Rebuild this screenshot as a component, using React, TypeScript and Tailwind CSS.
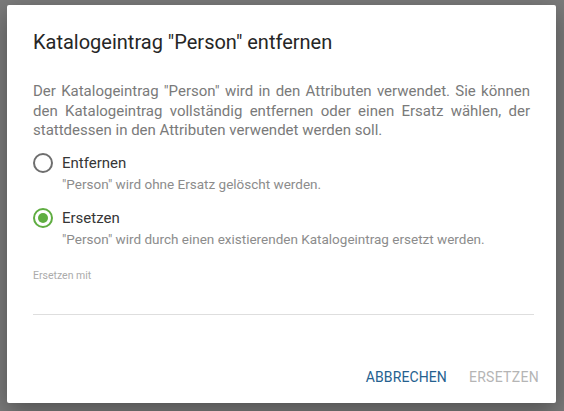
import { useState } from 'react';

type Option = {
  id: string;
  label: string;
  hint: string;
};

const options: Option[] = [
  { id: 'remove', label: 'Entfernen', hint: '"Person" wird ohne Ersatz gelöscht werden.' },
  { id: 'replace', label: 'Ersetzen', hint: '"Person" wird durch einen existierenden Katalogeintrag ersetzt werden.' },
];

function Radio({ checked }: { checked: boolean }) {
  return (
    <span
      className={`flex h-[20px] w-[20px] shrink-0 items-center justify-center rounded-full border-2 ${
        checked ? 'border-[#5fad41]' : 'border-[#6e6e6e]'
      }`}
    >
      {checked && <span className="h-[10px] w-[10px] rounded-full bg-[#5fad41]" />}
    </span>
  );
}

export default function App() {
  const [choice, setChoice] = useState('replace');

  return (
    <div className="h-[411px] w-[564px] bg-[#7b7b7b] pl-[7px] pt-[5px] font-['Roboto',sans-serif]">
      <div className="flex h-[398px] w-[549px] flex-col rounded-[2px] bg-white shadow-[0_8px_24px_rgba(0,0,0,0.35)]">
        <div className="px-[26px] pt-[25px]">
          <h2 className="text-[20px] leading-[24px] text-[#262626]">Katalogeintrag "Person" entfernen</h2>

          <p className="mt-[28px] text-justify text-[15px] leading-[19.5px] text-[#7a7a7a]">
            Der Katalogeintrag "Person" wird in den Attributen verwendet. Sie können den Katalogeintrag vollständig
            entfernen oder einen Ersatz wählen, der stattdessen in den Attributen verwendet werden soll.
          </p>

          <div className="mt-[11px] flex flex-col gap-[13px]">
            {options.map((o) => (
              <button key={o.id} onClick={() => setChoice(o.id)} className="flex items-start gap-[9px] text-left">
                <span className="pt-[1px]">
                  <Radio checked={choice === o.id} />
                </span>
                <span className="flex flex-col">
                  <span className="text-[15px] leading-[22px] text-[#363636]">{o.label}</span>
                  <span className="text-[13.5px] leading-[20px] text-[#8c8c8c]">{o.hint}</span>
                </span>
              </button>
            ))}
          </div>

          <div className="mt-[20px]">
            <label className="block text-[10.5px] leading-[14px] text-[#ababab]">Ersetzen mit</label>
            <div className="mr-[-4px] h-[32px] border-b border-[#dedede]" />
          </div>
        </div>

        <div className="mt-auto flex justify-end gap-[22px] px-[17px] pb-[16px]">
          <button className="text-[14px] leading-[20px] tracking-[0.1px] text-[#25618f]">ABBRECHEN</button>
          <button className="text-[14px] leading-[20px] tracking-[0.3px] text-[#b5b5b5]">ERSETZEN</button>
        </div>
      </div>
    </div>
  );
}
